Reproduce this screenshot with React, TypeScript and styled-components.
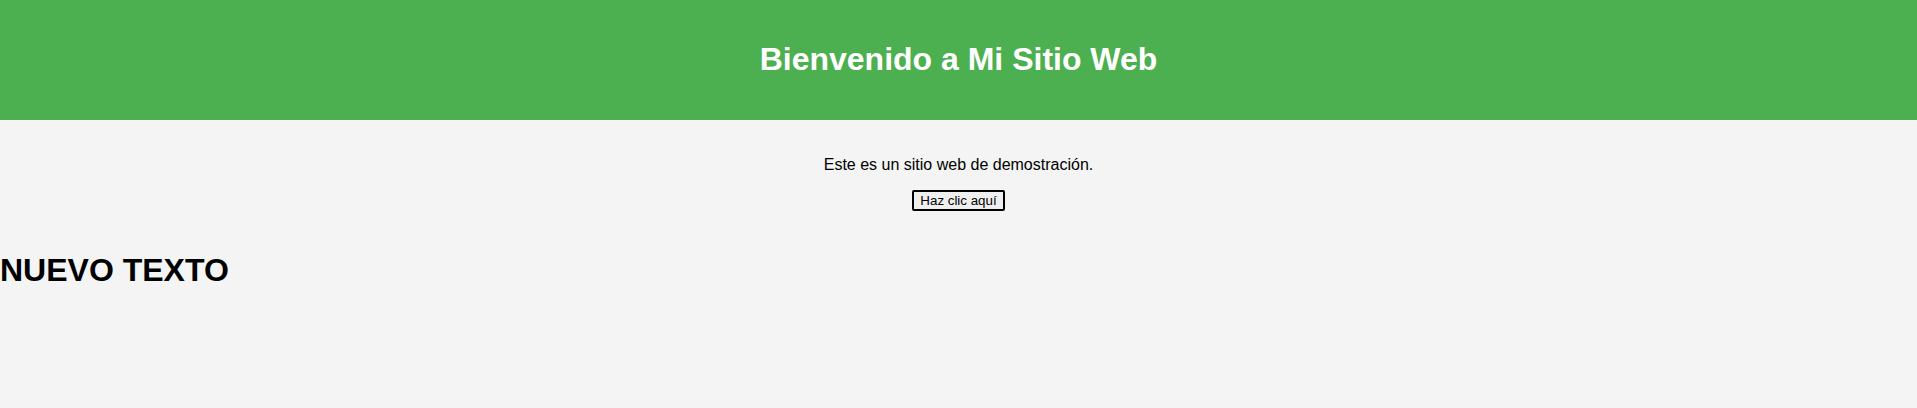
import React from "react";
import styled, { createGlobalStyle } from "styled-components";

const Global = createGlobalStyle`
  html, body {
    margin: 0;
    padding: 0;
    background: #f4f4f4;
    font-family: "Liberation Sans", Arial, sans-serif;
    color: #000;
  }
`;

const Header = styled.header`
  background: #4caf50;
  color: #fff;
  padding: 20px;
  text-align: center;
`;

const Title = styled.h1`
  margin: 21.44px 0;
  font-size: 32px;
  font-weight: bold;
`;

const Main = styled.main`
  padding: 20px;
  text-align: center;
`;

const Text = styled.p`
  margin: 16px 0;
  font-size: 16px;
`;

const Button = styled.button`
  font-family: "Liberation Sans", Arial, sans-serif;
  font-size: 13.33px;
  padding: 1px 6px;
  border: 2px solid #000;
  border-radius: 2px;
  background: #efefef;
  color: #000;
`;

const Heading = styled.h1`
  margin: 21.44px 0;
  font-size: 32px;
  font-weight: bold;
`;

export default function App() {
  return (
    <>
      <Global />
      <Header>
        <Title>Bienvenido a Mi Sitio Web</Title>
      </Header>
      <Main>
        <Text>Este es un sitio web de demostración.</Text>
        <Button>Haz clic aquí</Button>
      </Main>
      <Heading>NUEVO TEXTO</Heading>
    </>
  );
}
